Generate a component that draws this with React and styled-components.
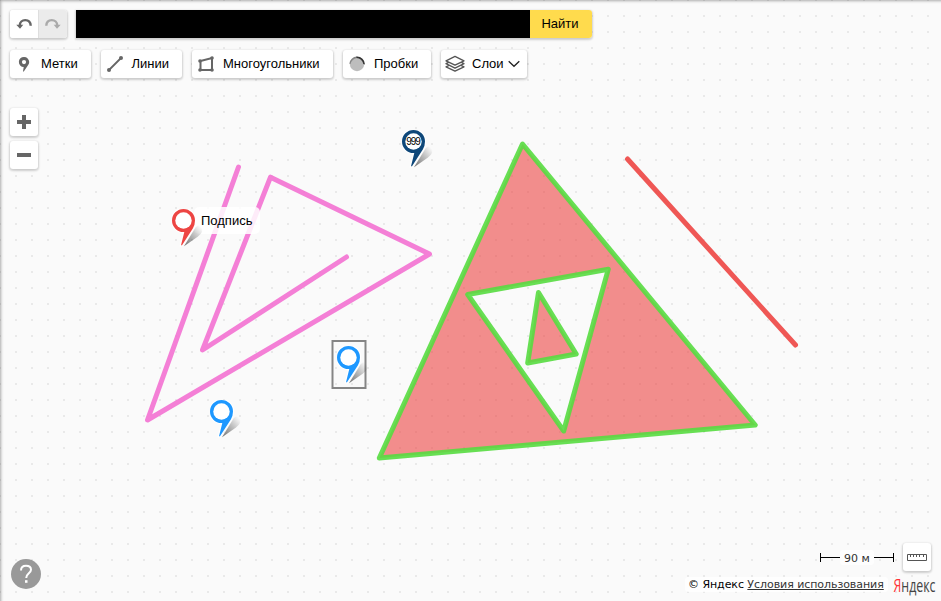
import React from "react";
import styled, { createGlobalStyle, css } from "styled-components";

const GlobalStyle = createGlobalStyle`
  html, body { margin: 0; padding: 0; }
  body { font-family: "Liberation Sans", Arial, sans-serif; color: #000; overflow: hidden; }
  svg { display: block; }
`;

const MapRoot = styled.div`
  position: relative;
  width: 941px;
  height: 601px;
  overflow: hidden;
  background: #fafafa;
`;

const GridCanvas = styled.svg`
  position: absolute;
  inset: 0;
`;

const EdgeShade = styled.div`
  position: absolute;
  left: 0;
  top: 0;
  width: 960px;
  height: 620px;
  pointer-events: none;
  box-shadow: inset 1px 1px 3px rgba(0, 0, 0, 0.32);
`;

const Controls = styled.div`
  position: relative;
  display: flex;
  flex-direction: column;
  justify-content: space-between;
  height: 601px;
  box-sizing: border-box;
  padding: 10px 5px 4px 10px;
`;

const TopControls = styled.div`
  display: flex;
  flex-direction: column;
  align-items: flex-start;
`;

const Row = styled.div`
  display: flex;
  gap: ${(p) => p.$gap}px;
  margin-bottom: ${(p) => p.$after || 0}px;
`;

const raised = css`
  background: #fff;
  border-radius: 3px;
  box-shadow: 0 1px 2px 1px rgba(0, 0, 0, 0.15), 0 2px 5px -3px rgba(0, 0, 0, 0.15);
`;

const ButtonGroup = styled.div`
  ${raised}
  display: flex;
  width: 57px;
  height: 28px;
  overflow: hidden;
`;

const HistoryButton = styled.button`
  display: flex;
  align-items: center;
  justify-content: center;
  width: ${(p) => (p.$disabled ? 29 : 28)}px;
  height: 28px;
  padding: 0;
  border: 0;
  box-sizing: border-box;
  border-left: ${(p) => (p.$disabled ? "1px solid #dedede" : "0")};
  background: ${(p) => (p.$disabled ? "#ebebeb" : "#fff")};
`;

const SearchForm = styled.div`
  ${raised}
  display: flex;
  width: 516px;
  height: 28px;
  border-radius: 0 3px 3px 0;
`;

const SearchField = styled.div`
  width: 454px;
  background: #000;
`;

const SearchButton = styled.button`
  width: 62px;
  padding: 0 2px 0 0;
  border: 0;
  border-radius: 0 3px 3px 0;
  background: #ffdb4d;
  color: #000;
  font: 13px/28px "Liberation Sans", Arial, sans-serif;
`;

const ToolButton = styled.button`
  ${raised}
  display: flex;
  align-items: center;
  width: ${(p) => p.$width}px;
  height: 28px;
  padding: 0;
  border: 0;
  color: #000;
  font: 13px/28px "Liberation Sans", Arial, sans-serif;
`;

const ToolIcon = styled.span`
  flex: none;
  width: ${(p) => p.$width}px;
  height: 28px;
`;

const ToolLabel = styled.span`
  height: 28px;
  white-space: nowrap;
`;

const ZoomColumn = styled.div`
  display: flex;
  flex-direction: column;
  gap: 5px;
`;

const SquareButton = styled.button`
  ${raised}
  width: 28px;
  height: 28px;
  padding: 0;
  border: 0;
`;

const BottomControls = styled.div`
  display: flex;
  align-items: flex-end;
  justify-content: space-between;
`;

const HelpButton = styled.div`
  width: 32px;
  height: 32px;
  margin-bottom: 7px;
`;

const BottomRight = styled.div`
  display: flex;
  flex-direction: column;
  align-items: flex-end;
`;

const ScaleRow = styled.div`
  display: flex;
  align-items: center;
  gap: 9px;
  padding-right: 5px;
`;

const ScaleLine = styled.div`
  display: flex;
  align-items: center;
  width: 74px;
  height: 15px;
`;

const ScaleTick = styled.div`
  box-sizing: border-box;
  flex: 1;
  height: 9px;
  border: 0 solid #000;
  border-${(p) => p.$side}-width: 1px;
  background: linear-gradient(#000, #000) 0 4px / 100% 1px no-repeat;
`;

const ScaleText = styled.span`
  width: 34px;
  border-radius: 3px;
  background: rgba(255, 255, 255, 0.75);
  text-align: center;
  font: 11px/17px "DejaVu Sans", sans-serif;
  height: 15px;
  color: #333;
`;

const LegalRow = styled.div`
  display: flex;
  align-items: center;
  height: 26px;
`;

const Legal = styled.div`
  width: 203px;
  height: 15px;
  box-sizing: border-box;
  padding-left: 3px;
  margin-right: 5px;
  border-radius: 3px;
  background: rgba(255, 255, 255, 0.75);
  font: 11px/16px "DejaVu Sans", sans-serif;
  letter-spacing: -0.06px;
  white-space: nowrap;
`;

const LegalLink = styled.a`
  color: #333;
  text-decoration: underline;
`;

const Placemark = styled.div`
  position: absolute;
  left: ${(p) => p.$x}px;
  top: ${(p) => p.$y}px;
`;

const PinShape = styled.svg`
  position: relative;
`;

const PinBody = styled.path`
  fill: ${(p) => p.$color};
  stroke: #fff;
  stroke-width: 2.4px;
  stroke-opacity: 0.85;
  paint-order: stroke;
`;

const PinCount = styled.span`
  position: absolute;
  left: 0;
  top: 6px;
  width: 22px;
  text-align: center;
  font: 10px/12px "Liberation Sans", Arial, sans-serif;
  letter-spacing: -1px;
`;

const Caption = styled.span`
  position: absolute;
  left: 22px;
  top: -2px;
  width: 66px;
  height: 27px;
  box-sizing: border-box;
  padding-left: 7px;
  border-radius: 5px;
  background: rgba(255, 255, 255, 0.85);
  font: 13px/27px "Liberation Sans", Arial, sans-serif;
`;

function Pin({ id, x, y, color, count, caption }) {
  return (
    <Placemark $x={x} $y={y}>
      {caption && <Caption>{caption}</Caption>}
      <PinShape width="34" height="40">
        <defs>
          <linearGradient id={id} x1="11" y1="36" x2="30" y2="19" gradientUnits="userSpaceOnUse">
            <stop offset="0" stopColor="#000" stopOpacity=".55" />
            <stop offset=".5" stopColor="#000" stopOpacity=".28" />
            <stop offset="1" stopColor="#000" stopOpacity="0" />
          </linearGradient>
        </defs>
        <path d="M12 37.2L23.5 18.5Q27 14.5 30 18Q32 23 26 27.5Z" fill={`url(#${id})`} />
        <PinBody
          $color={color}
          d="M11.5 0A11.5 11.5 0 0 0 11.5 23L12.3 23L9 36.3L10 36.3L20.8 19.5Q23 16 23 11.5A11.5 11.5 0 0 0 11.5 0Z"
        />
        <circle cx="11.5" cy="11.5" r="8.2" fill="#fff" />
      </PinShape>
      {count && <PinCount>{count}</PinCount>}
    </Placemark>
  );
}

function MapDrawing() {
  return (
    <GridCanvas width="941" height="601">
      <defs>
        <pattern id="dots" x="-1" y="-1" width="16" height="16" patternUnits="userSpaceOnUse">
          <rect width="2" height="2" fill="#e9e9e9" />
        </pattern>
      </defs>
      <rect width="941" height="601" fill="url(#dots)" />
      <path
        d="M522.5 144L755.2 425L379.3 458ZM467.7 294.5L608.3 269.2L563.7 431ZM538.5 292.5L576.2 354L527.7 363Z"
        fill="#ed4543" fillOpacity=".6" fillRule="evenodd" stroke="#56db40" strokeOpacity=".9" strokeWidth="5" strokeLinejoin="round"
      />
      <path
        d="M238.5 167L147.5 420L429.5 254L270.5 177.2L202.5 350L346.5 257"
        fill="none" stroke="#f371d1" strokeOpacity=".9" strokeWidth="5" strokeLinecap="round" strokeLinejoin="round"
      />
      <path d="M627.5 159L795.5 345" stroke="#ed4543" strokeOpacity=".9" strokeWidth="5" strokeLinecap="round" />
      <rect x="332.5" y="341" width="33" height="47" fill="none" stroke="#858585" strokeWidth="2" />
    </GridCanvas>
  );
}

const Undo = ({ color, flip }) => (
  <svg width="28" height="28" viewBox="0 0 28 28">
    <g transform={flip ? "translate(28 0) scale(-1 1)" : undefined}>
      <path d="M9.8 15.5C9.8 12.2 12.2 10.1 15.2 10.1C18.4 10.1 20.6 12.2 20.7 15.8" fill="none" stroke={color} strokeWidth="2.4" />
      <path d="M6.3 14.7H13.3L10 18.8Z" fill={color} />
    </g>
  </svg>
);

const PointIcon = () => (
  <svg width="31" height="28">
    <path fillRule="evenodd" fill="#666" d="M14 7A5 5 0 0 0 13.7 17L13 21.5L13.8 21.5L18 15.2Q19.2 13.8 19.2 12A5 5 0 0 0 14 7ZM14 10A2.1 2.1 0 1 1 14 14.2A2.1 2.1 0 0 1 14 10Z" />
  </svg>
);

const LineIcon = () => (
  <svg width="30" height="28">
    <path d="M8 20L20 8" stroke="#666" strokeWidth="1.8" />
    <circle cx="8" cy="20" r="2" fill="#666" /><circle cx="20" cy="8" r="2" fill="#666" />
  </svg>
);

const PolygonIcon = () => (
  <svg width="31" height="28">
    <path d="M8.5 11L20 8V20H8.5Z" fill="none" stroke="#666" strokeWidth="2" />
    <g fill="#666"><circle cx="8" cy="11" r="1.8" /><circle cx="20" cy="8" r="1.8" /><circle cx="20" cy="20" r="1.8" /><circle cx="8" cy="20" r="1.8" /></g>
  </svg>
);

const TrafficIcon = () => (
  <svg width="31" height="28">
    <circle cx="14" cy="14" r="7.2" fill="#bdbdbd" />
    <path d="M6.3 13.8A7.8 7.8 0 0 1 14 6.6V8A8 8 0 0 0 7.5 14Z" fill="#888" />
    <path d="M13.5 6.5A8 8 0 0 1 22 14.5L20.3 14A7 7 0 0 0 13.5 8Z" fill="#333" />
  </svg>
);

const LayersIcon = () => (
  <svg width="31" height="28">
    <g fill="#fff" stroke="#555" strokeWidth="1.3" strokeLinejoin="round">
      <path d="M5 16.8L14 21.2L23 16.8L14 12.5Z" />
      <path d="M5 13.7L14 18.1L23 13.7L14 9.4Z" />
      <path d="M5 10.8L14 15.2L23 10.8L14 6.4Z" />
    </g>
  </svg>
);

const tools = [
  { label: "Метки", width: 81, icon: <PointIcon />, iconWidth: 31 },
  { label: "Линии", width: 81, icon: <LineIcon />, iconWidth: 30.5 },
  { label: "Многоугольники", width: 141, icon: <PolygonIcon />, iconWidth: 31 },
  { label: "Пробки", width: 88, icon: <TrafficIcon />, iconWidth: 31 },
  { label: "Слои", width: 86, icon: <LayersIcon />, iconWidth: 31, arrow: true },
];

export default function App() {
  return (
    <>
      <GlobalStyle />
      <MapRoot>
        <MapDrawing />
        <Pin id="shadow-red" x={172} y={209} color="#ed4543" caption="Подпись" />
        <Pin id="shadow-navy" x={402} y={130} color="#0e4779" count="999" />
        <Pin id="shadow-framed" x={337} y={346} color="#1e98ff" />
        <Pin id="shadow-blue" x={210} y={400} color="#1e98ff" />
        <EdgeShade />
        <Controls>
          <TopControls>
            <Row $gap={9} $after={12}>
              <ButtonGroup>
                <HistoryButton><Undo color="#666" /></HistoryButton>
                <HistoryButton $disabled><Undo color="#aaa" flip /></HistoryButton>
              </ButtonGroup>
              <SearchForm>
                <SearchField />
                <SearchButton>Найти</SearchButton>
              </SearchForm>
            </Row>
            <Row $gap={10} $after={30}>
              {tools.map((t) => (
                <ToolButton key={t.label} $width={t.width}>
                  <ToolIcon $width={t.iconWidth}>{t.icon}</ToolIcon>
                  <ToolLabel>{t.label}</ToolLabel>
                  {t.arrow && (
                    <svg width="20" height="28"><path d="M4.7 11.3L10 16.3L15.3 11.3" fill="none" stroke="#222" strokeWidth="1.3" /></svg>
                  )}
                </ToolButton>
              ))}
            </Row>
            <ZoomColumn>
              <SquareButton aria-label="+">
                <svg width="28" height="28"><path d="M7 14H21M14 7V21" stroke="#666" strokeWidth="4" /></svg>
              </SquareButton>
              <SquareButton aria-label="−">
                <svg width="28" height="28"><path d="M7 14H21" stroke="#666" strokeWidth="4" /></svg>
              </SquareButton>
            </ZoomColumn>
          </TopControls>
          <BottomControls>
            <HelpButton>
              <svg width="32" height="32">
                <circle cx="16" cy="16" r="15" fill="#999" />
                <path d="M11 12.5C11 9 13.2 7.8 16 7.8C19 7.8 21 9.2 21 11.8C21 15.3 16.2 15.5 16.2 20" fill="none" stroke="#fff" strokeWidth="2" />
                <rect x="15" y="22.2" width="2.5" height="2.6" fill="#fff" />
              </svg>
            </HelpButton>
            <BottomRight>
              <ScaleRow>
                <ScaleLine>
                  <ScaleTick $side="left" /><ScaleText>90 м</ScaleText><ScaleTick $side="right" />
                </ScaleLine>
                <SquareButton aria-label="ruler">
                  <svg width="28" height="28"><path d="M4.5 11.5H23.5V17.5H4.5ZM7.5 12V14M10.5 12V14M13.5 12V14M16.5 12V14M20.5 12V14" fill="none" stroke="#555" /></svg>
                </SquareButton>
              </ScaleRow>
              <LegalRow>
                <Legal>© Яндекс <LegalLink>Условия использования</LegalLink></Legal>
                <svg width="43" height="30">
                  <text x="0.5" y="23" fontFamily="Open Sans, sans-serif" fontSize="19" textLength="42" lengthAdjust="spacingAndGlyphs" fill="#444">
                    <tspan fill="#f33">Я</tspan>ндекс
                  </text>
                </svg>
              </LegalRow>
            </BottomRight>
          </BottomControls>
        </Controls>
      </MapRoot>
    </>
  );
}
